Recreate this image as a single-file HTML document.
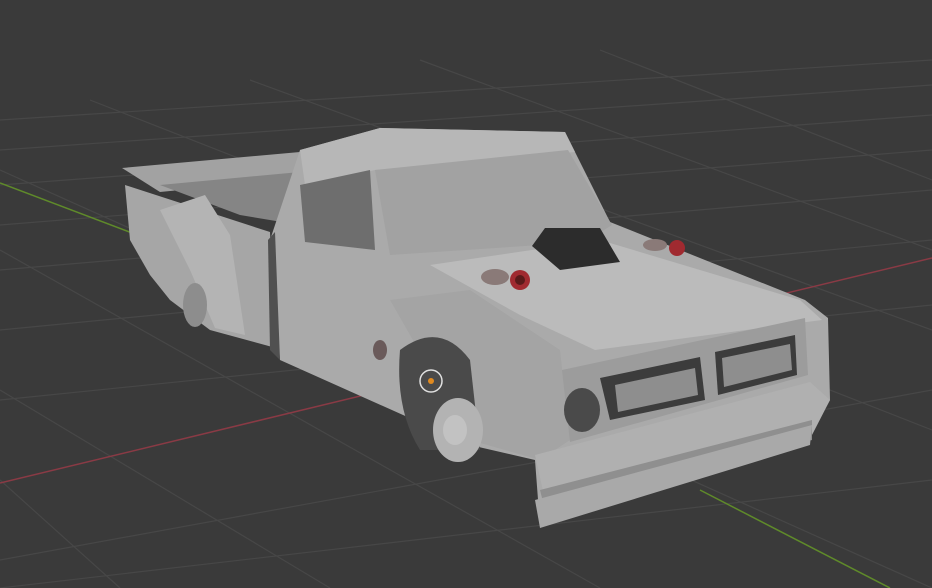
<!DOCTYPE html>
<html><head><style>
html,body{margin:0;padding:0;background:#3a3a3a;overflow:hidden}
svg{display:block}
</style></head><body>
<svg width="932" height="588" viewBox="0 0 932 588" xmlns="http://www.w3.org/2000/svg">
<rect width="932" height="588" fill="#3a3a3a"/>
<g stroke="#474747" stroke-width="1.2" fill="none">
<line x1="0" y1="120" x2="932" y2="60"/>
<line x1="0" y1="150" x2="932" y2="85"/>
<line x1="0" y1="185" x2="932" y2="115"/>
<line x1="0" y1="225" x2="932" y2="150"/>
<line x1="0" y1="270" x2="932" y2="190"/>
<line x1="0" y1="330" x2="932" y2="240"/>
<line x1="0" y1="400" x2="932" y2="305"/>
<line x1="0" y1="560" x2="932" y2="390"/>
<line x1="0" y1="588" x2="932" y2="480"/>
<line x1="0" y1="250" x2="600" y2="588"/>
<line x1="0" y1="170" x2="932" y2="588"/>
<line x1="90" y1="100" x2="932" y2="430"/>
<line x1="250" y1="80" x2="932" y2="330"/>
<line x1="420" y1="60" x2="932" y2="250"/>
<line x1="600" y1="50" x2="932" y2="180"/>
<line x1="0" y1="390" x2="330" y2="588"/>
<line x1="0" y1="480" x2="120" y2="588"/>
</g>
<line x1="0" y1="483" x2="932" y2="258" stroke="#8a3a45" stroke-width="1.5"/>
<line x1="0" y1="183" x2="140" y2="236" stroke="#5f8a2a" stroke-width="1.5"/>
<line x1="700" y1="490" x2="890" y2="588" stroke="#5f8a2a" stroke-width="1.5"/>
<!-- bed -->
<polygon points="122,168 300,152 302,178 160,192" fill="#a2a2a2"/>
<polygon points="160,185 300,172 300,225 240,215" fill="#858585"/>
<polygon points="125,185 270,232 276,348 210,330 170,300 150,275 130,240" fill="#a6a6a6"/>
<polygon points="160,210 205,195 230,235 245,335 215,328 190,270" fill="#b4b4b4"/>
<ellipse cx="195" cy="305" rx="12" ry="22" fill="#8d8d8d"/>
<!-- cab + body -->
<polygon points="270,240 300,150 380,128 565,132 610,222 805,300 828,318 830,400 812,432 540,526 535,460 470,445 280,360" fill="#aaaaaa"/>
<polygon points="300,150 380,128 565,132 575,152 375,170 305,185" fill="#b7b7b7"/>
<polygon points="375,170 568,150 612,225 585,242 390,255" fill="#a2a2a2"/>
<polygon points="300,185 370,170 375,250 305,242" fill="#6e6e6e"/>
<polygon points="268,240 275,232 280,360 270,350" fill="#505050"/>
<!-- hood -->
<polygon points="430,265 600,240 800,300 822,320 595,350 520,315" fill="#bbbbbb"/>
<polygon points="390,300 470,290 560,350 570,440 540,460 470,440" fill="#a4a4a4"/>
<!-- scoop -->
<polygon points="532,246 545,228 600,228 620,262 560,270" fill="#2c2c2c"/>
<circle cx="520" cy="280" r="10" fill="#a02a30"/><circle cx="520" cy="280" r="5" fill="#5a1a1a"/>
<ellipse cx="495" cy="277" rx="14" ry="8" fill="#8a7a78"/>
<circle cx="677" cy="248" r="8" fill="#a02a30"/>
<ellipse cx="655" cy="245" rx="12" ry="6" fill="#8a7a78"/>
<!-- grille -->
<polygon points="562,370 805,318 808,375 570,442" fill="#9c9c9c"/>
<polygon points="600,378 700,357 705,400 610,420" fill="#3c3c3c"/>
<polygon points="715,352 795,335 797,375 718,395" fill="#3c3c3c"/>
<polygon points="615,385 695,368 698,395 618,412" fill="#8e8e8e"/>
<polygon points="722,358 790,344 792,370 724,387" fill="#8e8e8e"/>
<ellipse cx="582" cy="410" rx="18" ry="22" fill="#4a4a4a"/>
<!-- bumper -->
<polygon points="535,455 810,382 830,400 812,435 545,500" fill="#b0b0b0"/>
<polygon points="540,490 812,420 812,440 545,510" fill="#8f8f8f"/>
<polygon points="535,500 812,425 810,445 540,528" fill="#a9a9a9"/>
<!-- wheel -->
<path d="M400 350 Q440 320 470 360 L480 450 L420 450 Q395 410 400 350Z" fill="#4a4a4a"/>
<ellipse cx="458" cy="430" rx="25" ry="32" fill="#b3b3b3"/>
<ellipse cx="455" cy="430" rx="12" ry="15" fill="#c2c2c2"/>
<ellipse cx="380" cy="350" rx="7" ry="10" fill="#6a5a5a"/>
<circle cx="431" cy="381" r="11" fill="none" stroke="#e0e0e0" stroke-width="1.5"/>
<circle cx="431" cy="381" r="3" fill="#e08a20"/>
</svg>
</body></html>
